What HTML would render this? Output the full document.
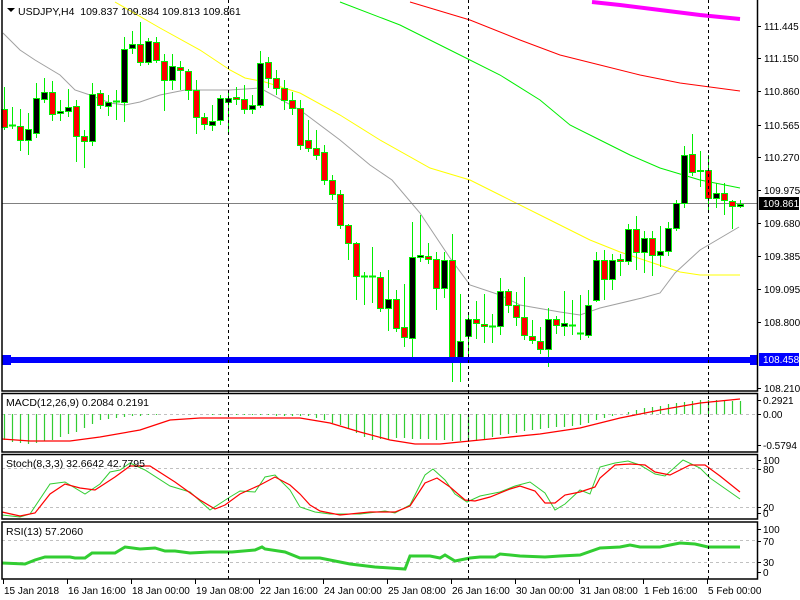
<!DOCTYPE html>
<html><head><meta charset="utf-8">
<style>
html,body{margin:0;padding:0;background:#fff;width:800px;height:600px;overflow:hidden}
svg{display:block}
text{font-family:"Liberation Sans",sans-serif;font-size:10.5px;fill:#000}
text.ax{font-size:10px}
</style></head><body>
<svg id="s" width="800" height="600" xmlns="http://www.w3.org/2000/svg">
<rect width="800" height="600" fill="#fff"/>
<g id="g"></g>
</svg>
<script>
var g=document.getElementById('g'),h='';
function pl(pts,c,w,extra){h+='<polyline fill="none" stroke="'+c+'" stroke-width="'+w+'" '+(extra||'')+' points="'+pts.map(function(p){return p.join(',')}).join(' ')+'"/>';}
function ln(x1,y1,x2,y2,c,w,extra){h+='<line x1="'+x1+'" y1="'+y1+'" x2="'+x2+'" y2="'+y2+'" stroke="'+c+'" stroke-width="'+(w||1)+'" '+(extra||'')+'/>';}
function tx(x,y,t,extra){h+='<text x="'+x+'" y="'+y+'" '+(extra||'')+'>'+t+'</text>';}
pl([[592,2],[620,5],[660,10],[700,15],[740,19]],'#ff00ff',4);
pl([[410,2],[470,20],[520,40],[560,55],[600,65],[640,75],[680,83],[740,91]],'#ff0000',1);
pl([[340,2],[400,25],[450,50],[500,75],[540,100],[570,125],[600,140],[630,155],[660,168],[700,180],[740,188]],'#00ee00',1);
pl([[115,2],[160,28],[200,50],[230,70],[245,78],[265,82],[300,93],[340,115],[380,140],[430,168],[470,180],[500,195],[540,215],[570,230],[590,240],[620,252],[650,262],[680,272],[700,275],[740,275]],'#ffff00',1);
pl([[3,33],[20,50],[35,60],[60,75],[75,90],[90,95],[110,103],[125,105],[140,102],[160,95],[185,90],[230,90],[260,88],[300,110],[340,140],[370,165],[392,180],[420,213],[450,258],[470,285],[500,295],[520,305],[560,312],[580,315],[600,308],[642,298],[660,293],[675,273],[700,250],[739,227]],'#a0a0a0',1);
ln(2,203.5,757,203.5,'#808080',1);
var C=[['R',109,127,87,130],['D',125,127,107,129],['R',126,140,109,151],['B',129,140,113,155],['B',98,133,83,138],['B',92,99,78,103],['R',92,114,81,121],['B',111,113,100,121],['B',107,111,89,117],['R',106,136,100,162],['R',136,141,130,168],['B',94,141,83,146],['R',93,105,90,109],['B',102,106,95,116],['D',101,103,90,120],['B',49,102,37,122],['B',44,48,31,54],['R',44,62,22,66],['B',41,62,38,65],['R',42,60,37,63],['R',61,80,54,111],['B',66,80,54,90],['R',67,70,61,90],['R',71,90,69,100],['R',90,117,80,134],['R',117,124,113,130],['B',121,125,105,131],['B',98,120,95,125],['B',98,102,90,133],['R',97,99,87,105],['R',99,109,85,114],['B',105,109,95,114],['B',63,105,51,108],
['R',62,78,57,88],['R',78,88,70,95],['R',88,100,80,110],['R',100,108,92,115],['R',108,145,100,150],['R',140,148,120,152],['R',148,155,130,160],['R',152,180,145,185],['R',180,194,175,200],
['R',194,225,190,229],['R',225,243,224,260],['R',243,276,242,300],['D',276,277,272,305],['D',276,277,247,303],['R',277,308,272,312],['B',299,308,270,331],['R',299,328,290,332],['R',327,337,284,347],['B',257,338,222,357],['B',255,257,215,262],['R',256,259,243,264],['R',259,288,252,310],['B',260,288,252,298],['R',260,361,234,382],['B',341,361,294,382],['B',319,336,312,356],['R',319,323,301,339],['R',324,326,294,343],['D',326,327,314,343],['B',291,326,278,335],['R',291,305,289,313],['R',305,317,292,326],['R',317,335,277,340],['R',336,340,320,344],['R',341,349,327,354],['B',319,349,308,367],['R',319,325,316,334],['B',323,326,291,336],['D',325,326,300,335],['D',333,334,295,340],['B',305,335,290,338],
['B',260,300,252,302],['R',260,279,250,300],['B',260,279,254,290],['R',259,261,254,276],['B',229,261,224,265],['R',229,252,216,270],['B',238,252,231,273],['R',238,255,231,276],['B',251,255,226,267],['B',228,251,222,256],['B',203,228,200,231],['B',155,203,146,208],['R',154,172,134,176],['B',170,171,151,187],['R',170,198,155,212],['B',193,198,183,208],['R',193,200,183,215],['R',201,206,200,229],['B',204,206,200,208]];
C.forEach(function(c,i){var x=4+8*i;
 ln(x+0.5,c[3],x+0.5,c[4],'#00ee00',1);
 if(c[0]=='D'){ln(x-3,c[1]+0.5,x+4,c[1]+0.5,'#00ee00',2);}
 else h+='<rect x="'+(x-2.5)+'" y="'+(c[1]+0.5)+'" width="6" height="'+Math.max(1,c[2]-c[1])+'" fill="'+(c[0]=='R'?'#ff0000':'#000')+'" stroke="#00ee00" stroke-width="1"/>';
});
h+='<rect x="2" y="357" width="755" height="6" fill="#0000ff"/>';
h+='<rect x="2" y="355" width="9" height="10" fill="#0000ff"/><rect x="750" y="355" width="8" height="10" fill="#0000ff"/>';
ln(2,414.5,757,414.5,'#c0c0c0',1,'stroke-dasharray="3,3"');
var mh=[[3,440],[27,444],[51,440],[75,432],[99,420],[123,417],[147,415],[170,414],[310,416],[340,425],[370,440],[400,438],[440,440],[470,442],[500,435],[540,429],[580,425],[600,419],[620,414],[650,407],[700,400],[740,401]];
function interp(a,x){for(var k=0;k<a.length-1;k++){if(x>=a[k][0]&&x<=a[k+1][0]){var t=(x-a[k][0])/(a[k+1][0]-a[k][0]);return a[k][1]+t*(a[k+1][1]-a[k][1]);}}return a[a.length-1][1];}
for(var i=0;i<93;i++){var x=4+8*i;var y=Math.round(interp(mh,x));if(Math.abs(y-414)>=1)ln(x+0.5,414,x+0.5,y,'#32cd32',1.2);}
pl([[2,439],[30,441],[70,441],[100,437],[140,430],[170,420],[200,418],[300,418],[330,423],[360,432],[390,440],[415,444],[440,444],[470,441],[500,438],[540,434],[580,428],[620,418],[660,410],[700,403],[740,399]],'#ff0000',1.3);
ln(2,468.5,757,468.5,'#c0c0c0',1,'stroke-dasharray="3,3"');ln(2,507.5,757,507.5,'#c0c0c0',1,'stroke-dasharray="3,3"');
pl([[2,515],[20,517],[30,514],[50,484],[65,482],[85,494],[100,484],[110,472],[120,470],[130,463],[145,470],[170,486],[190,492],[210,510],[230,497],[240,491],[255,492],[265,477],[275,475],[290,490],[300,507],[315,512],[330,514],[360,514],[385,511],[395,513],[410,505],[425,475],[433,469],[445,480],[455,494],[467,502],[480,496],[500,492],[515,486],[530,482],[545,493],[555,510],[565,504],[580,490],[590,494],[600,467],[615,463],[628,461],[640,465],[655,474],[665,476],[683,460],[700,468],[710,478],[740,499]],'#32cd32',1);
pl([[2,512],[20,516],[35,513],[50,494],[65,484],[80,488],[95,490],[115,477],[130,466],[150,466],[175,482],[200,500],[215,509],[225,505],[240,494],[260,485],[275,477],[290,485],[300,494],[310,505],[320,511],[340,515],[370,512],[395,512],[410,506],[425,483],[437,478],[450,487],[465,500],[475,501],[490,497],[510,489],[520,486],[535,491],[545,503],[555,503],[565,495],[580,492],[595,487],[600,478],[615,465],[630,464],[645,465],[655,472],[670,475],[690,465],[705,465],[720,476],[740,492]],'#ff0000',1.2);
ln(2,540.5,757,540.5,'#c0c0c0',1,'stroke-dasharray="3,3"');ln(2,562.5,757,562.5,'#c0c0c0',1,'stroke-dasharray="3,3"');
pl([[2,563],[25,564],[35,560],[45,557],[70,557],[75,558],[85,558],[92,553],[115,553],[125,547],[140,549],[155,548],[165,551],[175,551],[190,553],[210,552],[232,552],[255,550],[262,547],[265,549],[285,552],[300,558],[320,558],[350,564],[375,567],[405,569],[410,556],[430,556],[440,558],[445,555],[455,561],[470,558],[480,557],[495,557],[500,554],[520,556],[545,557],[560,556],[580,555],[600,548],[620,547],[630,545],[640,547],[660,547],[680,543],[695,544],[708,547],[740,547]],'#32cd32',3);
[228,468,708].forEach(function(x){ln(x+0.5,0,x+0.5,579,'#000',1,'stroke-dasharray="3,3"');});
h+='<rect x="2" y="-1" width="755.5" height="392" fill="none" stroke="#000" stroke-width="1.5"/>';
h+='<rect x="2" y="393.5" width="755.5" height="58.5" fill="none" stroke="#000" stroke-width="1.5"/>';
h+='<rect x="2" y="454.5" width="755.5" height="64.5" fill="none" stroke="#000" stroke-width="1.5"/>';
h+='<rect x="2" y="522" width="755.5" height="57" fill="none" stroke="#000" stroke-width="1.5"/>';
var pr=[[26,'111.445'],[58,'111.150'],[91,'110.860'],[125,'110.565'],[157,'110.270'],[190,'109.975'],[223,'109.680'],[256,'109.385'],[289,'109.095'],[322,'108.800'],[388,'108.210']];
pr.forEach(function(p){ln(757,p[0]+0.5,761,p[0]+0.5,'#000',1);tx(764,p[0]+4,p[1],'class="ax"');});
h+='<rect x="759" y="197" width="40" height="13" fill="#000"/>';tx(763,207,'109.861','class="ax" style="fill:#fff"');
h+='<rect x="759" y="353" width="40" height="13" fill="#0000ff"/>';tx(763,363,'108.458','class="ax" style="fill:#fff"');
[[400,'0.2921'],[414,'0.00'],[445,'-0.5794'],[460,'100'],[469,'80'],[507,'20'],[513,'0'],[529,'100'],[541,'70'],[562,'30'],[572,'0']].forEach(function(p){ln(757,p[0]+0.5,761,p[0]+0.5,'#000',1);tx(763,p[0]+4,p[1],'class="ax"');});
h+='<path d="M7 8 L15 8 L11 12 Z" fill="#000"/>';
tx(18,15,'USDJPY,H4&#160;&#160;109.837 109.884 109.813 109.861');
tx(6,406,'MACD(12,26,9) 0.2084 0.2191');
tx(6,467,'Stoch(8,3,3) 32.6642 42.7795');
tx(6,535,'RSI(13) 57.2060');
var tl=['15 Jan 2018','16 Jan 16:00','18 Jan 00:00','19 Jan 08:00','22 Jan 16:00','24 Jan 00:00','25 Jan 08:00','26 Jan 16:00','30 Jan 00:00','31 Jan 08:00','1 Feb 16:00','5 Feb 00:00'];
tl.forEach(function(t,k){var x=3+64*k;ln(x+0.5,579,x+0.5,584,'#000',1);tx(x+1,594,t,'class="ax"');});
g.innerHTML=h;
</script>
</body></html>
